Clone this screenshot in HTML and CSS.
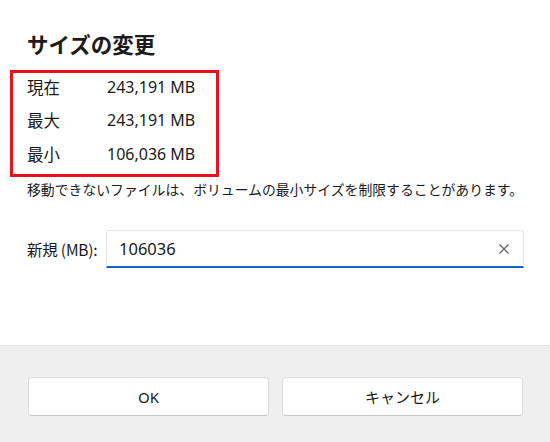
FILE: index.html
```html
<!DOCTYPE html>
<html lang="ja">
<head>
<meta charset="utf-8">
<link rel="stylesheet" href="styles.css">
</head>
<body>
<div class="dialog">
  <div class="content">
    <h1 class="title">サイズの変更</h1>
    <div class="info">
      <div class="rows">
        <div class="row"><span class="label">現在</span><span class="value">243,191 MB</span></div>
        <div class="row"><span class="label">最大</span><span class="value">243,191 MB</span></div>
        <div class="row"><span class="label">最小</span><span class="value">106,036 MB</span></div>
      </div>
    </div>
    <p class="note">移動できないファイルは、ボリュームの最小サイズを制限することがあります。</p>
    <div class="field">
      <span class="field-label">新規 (MB):</span>
      <div class="input">
        <span class="input-text">106036</span>
        <svg class="clear" width="12" height="12" viewBox="0 0 12 12"><path d="M1.5 1.5L10.5 10.5M10.5 1.5L1.5 10.5" stroke="#5c5c5c" stroke-width="1.1" fill="none"/></svg>
      </div>
    </div>
  </div>
  <div class="footer">
    <button class="btn">OK</button>
    <button class="btn">キャンセル</button>
  </div>
</div>
</body>
</html>
```
FILE: styles.css
```css
html, body {
  margin: 0;
  padding: 0;
  background: #ffffff;
}
body {
  width: 550px;
  height: 442px;
  font-family: "Noto Sans", "Noto Sans CJK JP", sans-serif;
  color: #1a1a1a;
  overflow: hidden;
}
.dialog {
  display: flex;
  flex-direction: column;
  height: 442px;
}
.content {
  height: 345px;
  box-sizing: border-box;
  padding: 0 0 0 27px;
}
.title {
  margin: 0;
  padding-top: 28px;
  font-family: "Noto Sans CJK JP", sans-serif;
  font-size: 21.5px;
  font-weight: 700;
  line-height: 31px;
  color: #1b1b1b;
}
.info {
  margin: 11px 0 0 -17px;
  width: 189px;
  height: 101px;
  border: 3px solid #e8131d;
  padding: 0 0 0 14px;
}
.rows {
  margin-top: -3px;
}
.row {
  display: flex;
  align-items: center;
  height: 33.5px;
}
.label {
  width: 80px;
  font-family: "Noto Sans CJK JP", sans-serif;
  font-size: 16.5px;
}
.value {
  font-family: "Noto Sans", sans-serif;
  font-size: 16px;
}
.note {
  margin: 2px 0 0;
  font-family: "Noto Sans CJK JP", sans-serif;
  font-size: 13.85px;
  line-height: 20px;
}
.field {
  margin-top: 31px;
  display: flex;
  align-items: center;
}
.field-label {
  width: 79px;
  font-size: 15.5px;
  font-family: "Noto Sans CJK JP", sans-serif;
  letter-spacing: -0.2px;
}
.input {
  width: 418px;
  height: 38px;
  box-sizing: border-box;
  border: 1px solid #e6e6e6;
  border-bottom: 2px solid #1a62c1;
  border-radius: 3px 3px 0 0;
  display: flex;
  align-items: center;
  justify-content: space-between;
  padding: 0 13px 0 12px;
}
.input-text {
  font-family: "Noto Sans", sans-serif;
  font-size: 16.5px;
  color: #1a1a1a;
}
.clear {
  display: block;
}
.footer {
  flex: 1;
  background: #efefef;
  border-top: 1px solid #e3e3e3;
  display: flex;
  gap: 13px;
  padding: 31px 27px 0 28px;
}
.btn {
  width: 241px;
  height: 39px;
  background: #ffffff;
  border: 1px solid #dcdcdc;
  border-bottom-color: #c8c8c8;
  border-radius: 4px;
  font-family: "Noto Sans", "Noto Sans CJK JP", sans-serif;
  font-size: 15px;
  color: #1a1a1a;
  padding: 0;
}
```
